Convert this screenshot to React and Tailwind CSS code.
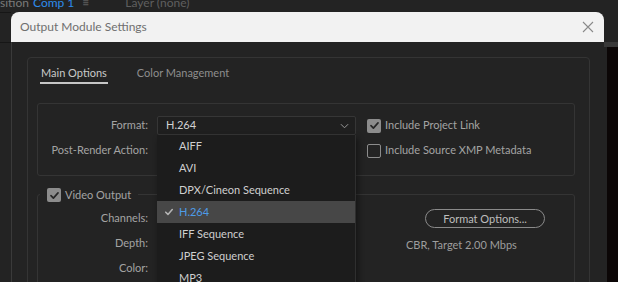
import React from "react";

const formats = [
  "AIFF",
  "AVI",
  "DPX/Cineon Sequence",
  "H.264",
  "IFF Sequence",
  "JPEG Sequence",
  "MP3",
  "OpenEXR Sequence",
];

function Check({ className = "" }) {
  return (
    <svg viewBox="0 0 14 14" className={className} fill="none">
      <path d="M3.2 7.2l2.6 2.6 5-5.6" stroke="currentColor" strokeWidth="1.8" strokeLinecap="round" strokeLinejoin="round" />
    </svg>
  );
}

function Checkbox({ checked }) {
  return checked ? (
    <div className="w-[14px] h-[14px] shrink-0 rounded-[2px] bg-[#8c8c8c] flex items-center justify-center text-[#262626]">
      <Check className="w-[13px] h-[13px]" />
    </div>
  ) : (
    <div className="w-[14px] h-[14px] shrink-0 rounded-[2px] border-[1.5px] border-[#8c8c8c]" />
  );
}

function FormatSelect() {
  return (
    <div className="relative w-[199px] h-[19px] bg-[#1f1f1f] border border-[#363636] rounded-[2px] flex items-center pl-[8px] pr-[6px] text-[#d2d2d2]">
      <span className="flex-1">H.264</span>
      <svg viewBox="0 0 10 6" className="w-[9px] h-[6px] text-[#9a9a9a]" fill="none">
        <path d="M1 1l4 4 4-4" stroke="currentColor" strokeWidth="1.1" />
      </svg>
      <ul className="absolute left-[-1px] top-[18px] w-[199px] bg-[#1c1c1c] border-r border-[#2f2f2f] shadow-[2px_3px_6px_rgba(0,0,0,0.45)] z-10">
        {formats.map((f) => {
          const sel = f === "H.264";
          return (
            <li
              key={f}
              className={`h-[22px] flex items-center ${sel ? "bg-[#474747] text-[#4d9be8]" : "text-[#cfcfcf]"}`}
            >
              <span className="w-[22px] flex justify-center pl-[1px]">
                {sel && <Check className="w-[12px] h-[12px] text-[#b5b5b5]" />}
              </span>
              {f}
            </li>
          );
        })}
      </ul>
    </div>
  );
}

export default function App() {
  return (
    <div
      className="w-[618px] h-[282px] overflow-hidden bg-[#232323] flex flex-col text-[11px]"
      style={{ fontFamily: "Lato, 'Noto Sans', sans-serif" }}
    >
      {/* background app header */}
      <div className="h-[12px] overflow-hidden shrink-0">
        <div className="-mt-[5px] leading-[16px] text-[12px] flex items-center whitespace-nowrap">
          <div className="w-[29px] overflow-hidden flex justify-end text-[#7a7a7a]">Composition</div>
          <span className="ml-[4px] text-[#2e8ceb]">Comp 1</span>
          <span className="ml-[8px] text-[#5f5f5f]">≡</span>
          <span className="ml-[36px] text-[#5f5f5f]">Layer (none)</span>
        </div>
      </div>

      <div className="flex flex-1 min-h-0">
        {/* left background panel */}
        <div className="w-[11px] shrink-0 flex flex-col border-t border-[#161616]">
          <div className="h-[29px] shrink-0" />
          <div className="h-px shrink-0 bg-[#161616]" />
        </div>

        {/* dialog */}
        <div className="w-[593px] shrink-0 flex flex-col">
          <div className="h-[30px] shrink-0 bg-[#f2f2f2] rounded-t-[8px] flex items-center pl-[9px] pr-[10px]">
            <span className="flex-1 text-[12px] text-[#6f6f6f]">Output Module Settings</span>
            <svg viewBox="0 0 12 12" className="w-[12px] h-[12px] text-[#8a8a8a]" fill="none">
              <path d="M1 1l10 10M11 1L1 11" stroke="currentColor" strokeWidth="1.1" />
            </svg>
          </div>

          <div className="flex-1 min-h-0 bg-[#232323] border-l border-[#3a3a3a] pl-[15px] pt-[15px]">
            <div className="w-[563px] h-[260px] border border-[#343434] rounded-[4px] pt-[6px]">
              {/* tabs */}
              <div className="flex pl-[12px] gap-[29px]">
                <div className="flex flex-col">
                  <span className="px-[1px] leading-[17px] text-[#c9c9c9]">Main Options</span>
                  <div className="mt-[1px] h-[2px] bg-[#c6c6c6]" />
                </div>
                <span className="leading-[17px] text-[#8e8e8e]">Color Management</span>
              </div>

              {/* main panel */}
              <div className="ml-[9px] mt-[19px] w-[538px] h-[73px] border border-[#343434] rounded-[3px] pt-[12px]">
                <div className="flex items-center h-[19px]">
                  <span className="w-[110px] text-right text-[#a3a3a3]">Format:</span>
                  <div className="ml-[9px]">
                    <FormatSelect />
                  </div>
                  <div className="ml-[11px] flex items-center gap-[4px] text-[#a3a3a3]">
                    <Checkbox checked />
                    <span>Include Project Link</span>
                  </div>
                </div>
                <div className="flex items-center h-[19px] mt-[6px]">
                  <span className="w-[110px] text-right text-[#a3a3a3]">Post-Render Action:</span>
                  <div className="ml-[219px] flex items-center gap-[4px] text-[#a3a3a3]">
                    <Checkbox />
                    <span>Include Source XMP Metadata</span>
                  </div>
                </div>
              </div>

              {/* video output group */}
              <div className="relative ml-[9px] mt-[18px] w-[538px] h-[120px] border border-[#343434] rounded-[3px] pt-[11px]">
                <div className="absolute -top-[8px] left-[2px] px-[7px] bg-[#232323] flex items-center gap-[4px] text-[#a3a3a3]">
                  <Checkbox checked />
                  <span>Video Output</span>
                </div>
                <div className="flex items-center h-[25px]">
                  <span className="w-[110px] text-right text-[#a3a3a3]">Channels:</span>
                  <button className="ml-[277px] w-[120px] h-[19px] rounded-full border border-[#8a8a8a] text-[#bdbdbd] leading-none">
                    Format Options...
                  </button>
                </div>
                <div className="flex items-center h-[25px]">
                  <span className="w-[110px] text-right text-[#a3a3a3]">Depth:</span>
                  <span className="ml-[258px] mt-[3px] text-[#9d9d9d]">CBR, Target 2.00 Mbps</span>
                </div>
                <div className="flex items-center h-[25px]">
                  <span className="w-[110px] text-right text-[#a3a3a3]">Color:</span>
                </div>
              </div>
            </div>
          </div>
        </div>

        {/* right background panel */}
        <div className="flex-1 flex flex-col">
          <div className="h-[30px] shrink-0" />
          <div className="h-[5px] shrink-0 bg-[#383838]" />
          <div className="flex-1 flex">
            <div className="w-[3px] bg-[#232323]" />
            <div className="flex-1 bg-[#0b0606]" />
          </div>
        </div>
      </div>
    </div>
  );
}
